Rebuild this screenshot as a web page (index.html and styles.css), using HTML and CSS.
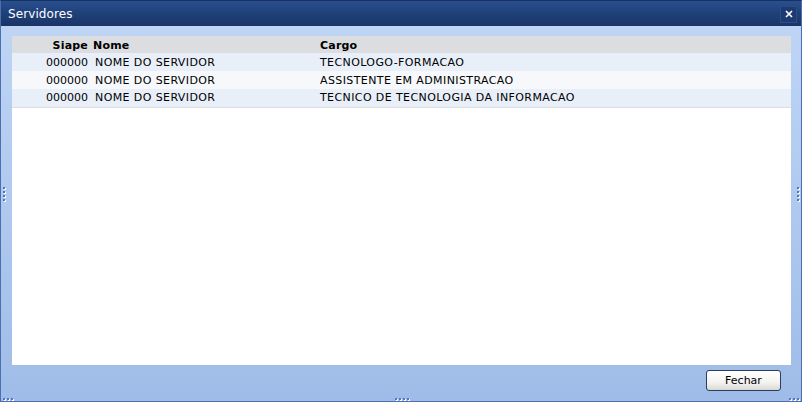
FILE: index.html
```html
<!DOCTYPE html>
<html>
<head>
<meta charset="utf-8">
<link rel="stylesheet" href="styles.css">
</head>
<body>
<div class="window">
  <div class="titlebar">
    <span class="title">Servidores</span>
    <span class="close">
      <svg width="14" height="14" viewBox="0 0 14 14"><path d="M4 4 L10 10 M10 4 L4 10" stroke="#ffffff" stroke-width="1.6"/></svg>
    </span>
  </div>
  <div class="body">
    <div class="grid">
      <table>
        <thead>
          <tr><th class="c-siape">Siape</th><th class="c-nome">Nome</th><th class="c-cargo">Cargo</th></tr>
        </thead>
        <tbody>
          <tr class="odd"><td class="c-siape">000000</td><td class="c-nome">NOME DO SERVIDOR</td><td class="c-cargo">TECNOLOGO-FORMACAO</td></tr>
          <tr class="even"><td class="c-siape">000000</td><td class="c-nome">NOME DO SERVIDOR</td><td class="c-cargo">ASSISTENTE EM ADMINISTRACAO</td></tr>
          <tr class="odd last"><td class="c-siape">000000</td><td class="c-nome">NOME DO SERVIDOR</td><td class="c-cargo">TECNICO DE TECNOLOGIA DA INFORMACAO</td></tr>
        </tbody>
      </table>
    </div>
    <div class="footer">
      <button class="btn">Fechar</button>
    </div>
  </div>
  <span class="grip grip-left"><i></i><i></i><i></i><i></i></span>
  <span class="grip grip-right"><i></i><i></i><i></i><i></i></span>
  <span class="grip grip-bottom"><i></i><i></i><i></i><i></i></span>
  <span class="grip grip-bl"><i></i><i></i><i></i></span>
  <span class="grip grip-br"><i></i><i></i><i></i></span>
</div>
</body>
</html>
```

FILE: styles.css
```css
html, body {
  margin: 0;
  padding: 0;
  background: #ffffff;
}
body {
  font-family: "DejaVu Sans", Verdana, sans-serif;
  font-size: 11px;
}
.window {
  position: relative;
  width: 800px;
  height: 400px;
  border: 1px solid #4c6fae;
  border-top-color: #1a3160;
  display: flex;
  flex-direction: column;
  background: linear-gradient(#c0d6f6, #9fbce8);
}
.titlebar {
  height: 25px;
  flex: none;
  display: flex;
  align-items: center;
  justify-content: space-between;
  padding: 1px 4px 0 7px;
  box-sizing: border-box;
  background: linear-gradient(#29508f, #1f4079 50%, #1a3566);
  color: #ffffff;
}
.title {
  font-size: 12px;
  letter-spacing: 0.1px;
}
.close {
  width: 15px;
  height: 15px;
  display: flex;
  align-items: center;
  justify-content: center;
  background: #1d3b72;
  border: 1px solid #2d4d88;
}
.body {
  flex: 1;
  display: flex;
  flex-direction: column;
  padding: 10px 10px 0 11px;
}
.grid {
  flex: 1;
  background: #ffffff;
}
table {
  border-collapse: collapse;
  width: 100%;
}
th, td {
  padding: 0;
  white-space: nowrap;
  letter-spacing: 0.4px;
  color: #000000;
}
thead tr {
  background: #dcdde0;
  height: 17px;
}
th {
  font-weight: bold;
  text-align: left;
  font-size: 11px;
  letter-spacing: 0.2px;
  padding-top: 1px;
}
tbody tr {
  height: 18px;
}
tr.odd { background: #e9eff8; }
tr.even { background: #f6f8fc; }
tr.last td { border-bottom: 1px solid #dcdde0; }
th.c-siape, td.c-siape {
  width: 76px;
  text-align: right;
  padding-right: 2px;
}
td.c-siape {
  letter-spacing: 0;
}
th.c-nome {
  width: 225px;
  padding-left: 3px;
}
td.c-nome {
  width: 223px;
  padding-left: 5px;
}
th.c-cargo, td.c-cargo {
  padding-left: 2px;
}
.footer {
  flex: none;
  display: flex;
  justify-content: flex-end;
  padding: 5px 10px 10px 0;
}
.btn {
  width: 75px;
  height: 21px;
  font-family: "DejaVu Sans", Verdana, sans-serif;
  font-size: 11px;
  color: #000000;
  border: 1px solid #2c3c5a;
  border-radius: 3px;
  background: linear-gradient(#ffffff, #f3f3f1 60%, #d8d8d4);
  padding: 0;
}
.grip {
  position: absolute;
  display: flex;
  gap: 2px;
}
.grip i {
  width: 2px;
  height: 2px;
  background: #4f79c0;
  box-shadow: 1px 1px 0 #ffffff;
}
.grip-left { left: 2px; top: 186px; flex-direction: column; }
.grip-right { right: 2px; top: 186px; flex-direction: column; }
.grip-bottom { left: 394px; bottom: 1px; }
.grip-bl { left: 2px; bottom: 1px; }
.grip-br { right: 2px; bottom: 1px; }
```
